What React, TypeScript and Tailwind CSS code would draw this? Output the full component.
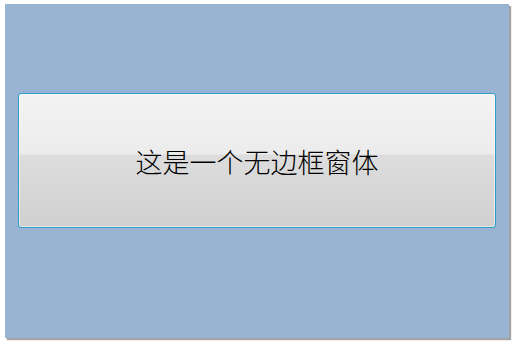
import React from "react";

export default function App() {
  return (
    <div className="w-[524px] h-[358px] bg-white pl-[5px] pt-[4px]">
      <div className="w-[504px] h-[334px] bg-[#98b4d2] shadow-[2px_2px_1px_rgba(90,90,90,0.55)] pl-[13px] pt-[89px]">
        <div
          className="w-[478px] h-[135px] rounded-[3px] border border-[#2f9cc8] bg-[linear-gradient(to_bottom,#f3f3f3_0%,#ececec_45%,#dddddd_46%,#d0d0d0_100%)] flex items-center justify-center shadow-[inset_0_0_0_1px_rgba(255,255,255,0.5)]"
        >
          <span
            className="text-[27px] text-black leading-none pt-[2px]"
            style={{ fontFamily: '"Noto Sans CJK SC", sans-serif', fontWeight: 300 }}
          >
            这是一个无边框窗体
          </span>
        </div>
      </div>
    </div>
  );
}
